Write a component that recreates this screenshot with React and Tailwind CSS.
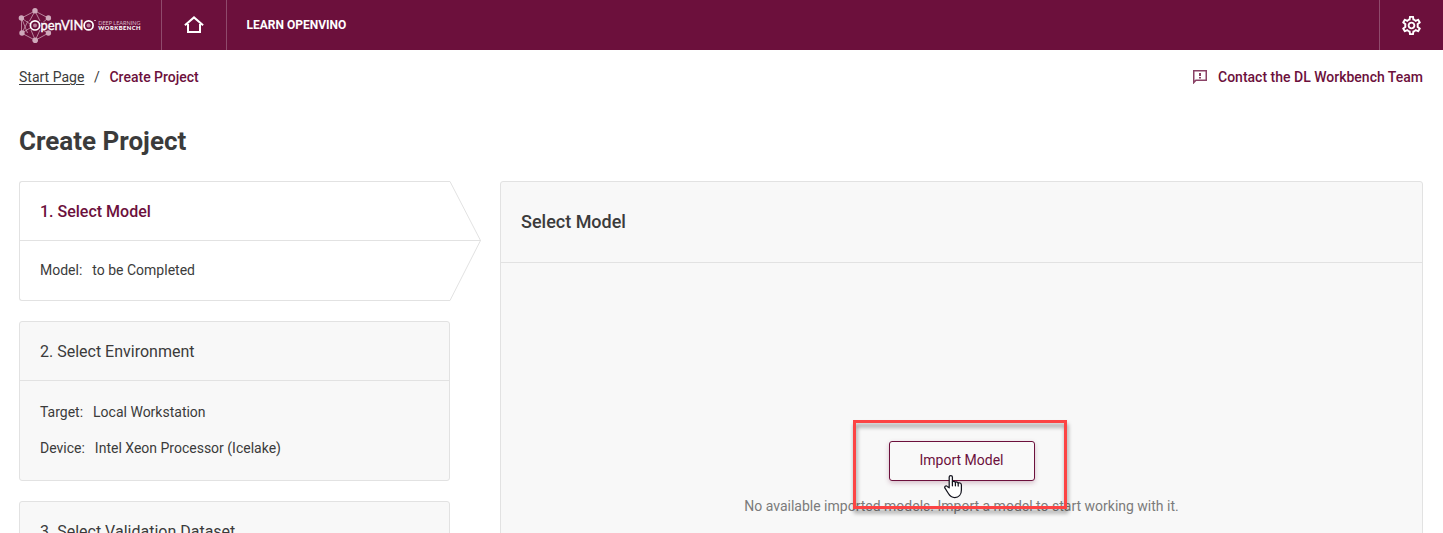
function Logo() {
  return (
    <svg width="161" height="50" viewBox="0 0 161 50" className="shrink-0" aria-label="OpenVINO Deep Learning Workbench">
      <g fill="none" stroke="#c99fb3" strokeWidth="0.8">
        <path d="M35 11L21.5 18v15L35.3 40.3 48.5 33M35 11l13.3 7" />
        <path d="M35 11l-5.5 10M35 11l5 10M21.5 18l8.5 6M48.3 18l-5 4M22 33l8-5M21.5 18l6 15M35.3 40.3L31 30M35.3 40.3L40 30M48.3 33L41 29M22 33l6-12" />
      </g>
      <g fill="#cfa9bb">
        <circle cx="35" cy="10.8" r="2.7" />
        <circle cx="21.4" cy="18" r="2.7" />
        <circle cx="48.4" cy="18" r="2.7" />
        <circle cx="22" cy="33" r="2.7" />
        <circle cx="48.4" cy="33" r="2.7" />
        <circle cx="35.2" cy="40.3" r="2.8" />
      </g>
      <circle cx="35" cy="25.4" r="4.6" fill="#6c103c" stroke="#fff" strokeWidth="1.7" />
      <circle cx="35" cy="25.4" r="2" fill="#b8849d" />
      <text x="40.5" y="30" fill="#fff" fontSize="13" fontFamily="Lato, sans-serif" textLength="42.8" lengthAdjust="spacingAndGlyphs" stroke="#fff" strokeWidth="0.35">penVIN</text>
      <circle cx="88.6" cy="25.4" r="4.5" fill="none" stroke="#fff" strokeWidth="1.7" />
      <circle cx="88.6" cy="25.4" r="2" fill="#b8849d" />
      <path d="M94 20.5h2" stroke="#d9b9c9" strokeWidth="0.8" />
      <text x="98.2" y="24.6" fill="#d6b6c5" fontSize="5.8" fontFamily="Lato, sans-serif" textLength="42.3" lengthAdjust="spacingAndGlyphs">DEEP LEARNING</text>
      <text x="98.2" y="30.3" fill="#fff" fontSize="5.8" fontFamily="Lato, sans-serif" fontWeight="900" textLength="42.3" lengthAdjust="spacing">WORKBENCH</text>
    </svg>
  );
}

function HomeIcon() {
  return (
    <svg width="20" height="18" viewBox="0 0 20 18" fill="none" stroke="#fff" strokeWidth="2">
      <path d="M0.9 9.3L10 1.4l9.1 7.9M4 8v8.1h12V8" />
    </svg>
  );
}

function GearIcon() {
  return (
    <svg width="23" height="23" viewBox="0 0 24 24" fill="#fff">
      <path d="M19.43 12.98c.04-.32.07-.64.07-.98s-.03-.66-.07-.98l2.11-1.65c.19-.15.24-.42.12-.64l-2-3.46c-.09-.16-.26-.25-.44-.25-.06 0-.12.01-.17.03l-2.49 1c-.52-.4-1.08-.73-1.69-.98l-.38-2.65C14.46 2.18 14.25 2 14 2h-4c-.25 0-.46.18-.49.42l-.38 2.65c-.61.25-1.17.59-1.69.98l-2.49-1c-.06-.02-.12-.03-.18-.03-.17 0-.34.09-.43.25l-2 3.46c-.13.22-.07.49.12.64l2.11 1.65c-.04.32-.07.65-.07.98s.03.66.07.98l-2.11 1.65c-.19.15-.24.42-.12.64l2 3.46c.09.16.26.25.44.25.06 0 .12-.01.17-.03l2.49-1c.52.4 1.08.73 1.69.98l.38 2.65c.03.24.24.42.49.42h4c.25 0 .46-.18.49-.42l.38-2.65c.61-.25 1.17-.59 1.69-.98l2.49 1c.06.02.12.03.18.03.17 0 .34-.09.43-.25l2-3.46c.12-.22.07-.49-.12-.64l-2.11-1.65zm-1.98-1.71c.04.31.05.52.05.73 0 .21-.02.43-.05.73l-.14 1.13.89.7 1.08.84-.7 1.21-1.27-.51-1.04-.42-.9.68c-.43.32-.84.56-1.25.73l-1.06.43-.16 1.13-.2 1.35h-1.4l-.19-1.35-.16-1.13-1.06-.43c-.43-.18-.83-.41-1.23-.71l-.91-.7-1.06.43-1.27.51-.7-1.21 1.08-.84.89-.7-.14-1.13c-.03-.31-.05-.54-.05-.74s.02-.43.05-.73l.14-1.13-.89-.7-1.08-.84.7-1.21 1.27.51 1.04.42.9-.68c.43-.32.84-.56 1.25-.73l1.06-.43.16-1.13.2-1.35h1.39l.19 1.35.16 1.13 1.06.43c.43.18.83.41 1.23.71l.91.7 1.06-.43 1.27-.51.7 1.21-1.07.85-.89.7.14 1.13zM12 8c-2.21 0-4 1.79-4 4s1.79 4 4 4 4-1.79 4-4-1.79-4-4-4zm0 6c-1.1 0-2-.9-2-2s.9-2 2-2 2 .9 2 2-.9 2-2 2z" />
    </svg>
  );
}

function FeedbackIcon() {
  return (
    <svg width="14" height="14" viewBox="0 0 14 14" fill="none">
      <path d="M.75 12.6V.75h12.5v9.5H2.9L.75 12.6z" stroke="#8a4266" strokeWidth="1.5" />
      <path d="M7 3v3M7 7v1.5" stroke="#6c103c" strokeWidth="1.6" />
    </svg>
  );
}

function HandCursor() {
  return (
    <svg width="19" height="25" viewBox="0 0 19 25" fill="#fff" stroke="#14141e" strokeWidth="1.25" strokeLinejoin="round" strokeLinecap="round">
      <path d="M5.2 13.800V3C5.200 1 8.400 1 8.400 3v5c.6-1 2.700-.8 3 .5.800-.9 2.500-.6 2.800.6.900-.7 3.200-.2 3.200 1.800v5c0 4.600-2.600 7.600-6.600 7.600-3.400 0-5-1.600-6.400-4L1 14.200c-1-1.800.900-3 2.300-1.800z" />
      <path d="M8.400 8v3.800M11.400 8.500v3.300M14.200 9.100v2.900" fill="none" />
    </svg>
  );
}

function Field({ label, value, className = "" }) {
  return (
    <div className={"flex gap-[10px] text-sm leading-5 " + className}>
      <span>{label}</span>
      <span>{value}</span>
    </div>
  );
}

function StepCard({ title, children, height }) {
  return (
    <section className={"w-[431px] rounded-[3px] border border-[#e2e2e2] bg-[#f8f8f8] " + height}>
      <h2 className="flex h-[59px] items-center border-b border-[#e2e2e2] px-5 pt-0.5 text-base">{title}</h2>
      {children}
    </section>
  );
}

export default function App() {
  return (
    <div className="h-[533px] w-[1443px] overflow-hidden bg-white font-['Roboto',sans-serif] text-[#3b3b3b]">
      <header className="flex h-[50px] bg-[#6c103c] text-white">
        <Logo />
        <a className="flex w-[66px] items-center justify-center border-x border-[#8f4a6c]"><HomeIcon /></a>
        <a className="flex items-center pl-[19.5px] text-xs font-bold">LEARN OPENVINO</a>
        <button className="ml-auto flex w-16 items-center justify-center border-l border-[#8f4a6c] pt-px"><GearIcon /></button>
      </header>

      <div className="flex h-[54px] items-center justify-between pl-[19px] pr-5 text-sm">
        <nav className="flex gap-[9.7px]">
          <a className="underline decoration-1 underline-offset-2">Start Page</a>
          <span>/</span>
          <span className="font-medium text-[#6c103c]">Create Project</span>
        </nav>
        <a className="flex items-center gap-[11px] font-medium text-[#6c103c]">
          <FeedbackIcon />
          Contact the DL Workbench Team
        </a>
      </div>

      <h1 className="ml-[19px] mt-[20px] h-[57px] text-[26px] font-bold leading-[34px]">Create Project</h1>

      <main className="ml-[19px] mr-5 flex items-start justify-between">
        <div className="flex w-[463px] flex-col gap-5">
          <section className="flex h-[120px]">
            <div className="w-[431px] rounded-l-[3px] border border-r-0 border-[#e2e2e2]">
              <h2 className="flex h-[59px] items-center border-b border-[#e2e2e2] px-5 pt-0.5 text-base font-medium text-[#6c103c]">1. Select Model</h2>
              <Field label="Model:" value="to be Completed" className="px-5 pt-[19px]" />
            </div>
            <svg width="32" height="120" viewBox="0 0 32 120" fill="none" stroke="#e2e2e2">
              <path d="M0 .5L30.500 59.500 0 119.500" />
              <path d="M0 59.500h31" />
            </svg>
          </section>
          <StepCard title="2. Select Environment" height="h-40">
            <div className="flex flex-col gap-4 px-5 pt-[21px]">
              <Field label="Target:" value="Local Workstation" />
              <Field label="Device:" value="Intel Xeon Processor (Icelake)" />
            </div>
          </StepCard>
          <StepCard title="3. Select Validation Dataset" height="h-[120px]" />
        </div>

        <section className="w-[923px] rounded-t-[3px] border border-[#e2e2e2] bg-[#f8f8f8]">
          <h2 className="flex h-[81px] items-center border-b border-[#e2e2e2] px-5 text-lg font-medium">Select Model</h2>
          <div className="flex h-[360px] flex-col items-center pt-[178px]">
            <div className="relative">
              <button className="block h-10 w-[146px] rounded-[3px] border border-[#6c103c] bg-[#f9f9f9] pb-0.5 text-sm text-[#6c103c] shadow-[0_2px_5px_rgba(108,16,60,0.25)]">
                Import Model
              </button>
              <div className="absolute -left-9 -top-[21px] z-10 h-[89px] w-[214px] border-[3px] border-[#fc4444] [filter:drop-shadow(1px_4px_2px_rgba(0,0,0,0.4))]" />
              <div className="absolute left-[55px] top-[33px] z-20"><HandCursor /></div>
            </div>
            <p className="mt-[15px] text-sm leading-5 text-[#7b7b7b]">No available imported models. Import a model to start working with it.</p>
          </div>
        </section>
      </main>
    </div>
  );
}
